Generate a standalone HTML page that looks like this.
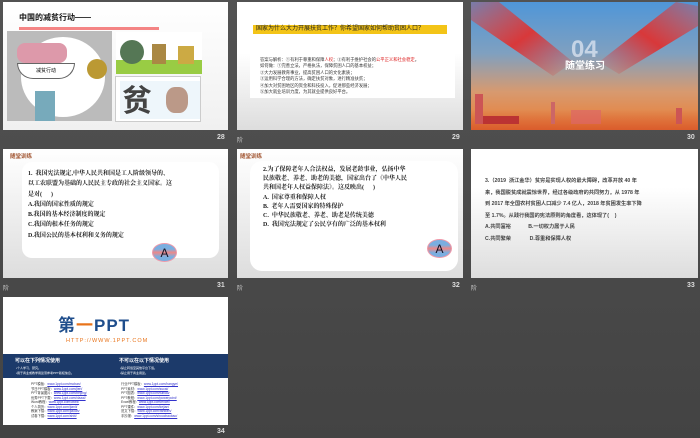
<!DOCTYPE html><html><head><meta charset="utf-8"><style>
*{margin:0;padding:0;box-sizing:border-box}
body{width:700px;height:438px;overflow:hidden;background:linear-gradient(#525252,#434343);font-family:"Liberation Sans","Noto Sans CJK SC",sans-serif;position:relative}
.s{position:absolute;overflow:hidden}
.a{position:absolute}
.n{position:absolute;color:#ddd;font-size:7px;font-weight:bold}
.l{position:absolute;color:#ccc;font-size:6px}
.q{font-family:"Liberation Serif","Noto Serif CJK SC",serif;font-weight:bold;color:#222;font-size:6px;line-height:10.3px;white-space:nowrap}
.ans{position:absolute;width:25px;height:19px;border-radius:50%;background:linear-gradient(#7aaee0 30%,#e88 50%,#7aaee0 75%);border:1px solid #e9a;font-size:12px;text-align:center;line-height:19px;color:#112}
.lk{color:#33c;text-decoration:underline}
</style></head><body>
<!-- slide 28 -->
<div class="s" style="left:3px;top:2px;width:225px;height:128px;background:linear-gradient(#fff,#f0f0f0)">
<div class="a" style="left:16px;top:10px;font-size:8px;font-weight:bold;color:#111">中国的减贫行动——</div>
<div class="a" style="left:16px;top:25px;width:140px;height:3px;background:#e33;opacity:.6"></div>
<div class="a" style="left:4px;top:29px;width:105px;height:90px;background:#bbb">
<div class="a" style="left:14px;top:6px;width:84px;height:80px;border-radius:50%;background:#fff"></div>
<div class="a" style="left:10px;top:12px;width:50px;height:20px;background:#d9a;border-radius:8px"></div>
<div class="a" style="left:10px;top:32px;width:58px;height:16px;background:#fff;border:1px solid #666;border-radius:0 0 30px 30px;font-size:5px;text-align:center;line-height:14px">减贫行动</div>
<div class="a" style="left:28px;top:60px;width:20px;height:30px;background:#7ab"></div>
<div class="a" style="left:80px;top:28px;width:20px;height:20px;background:#b93;border-radius:50%"></div></div>
<div class="a" style="left:113px;top:30px;width:86px;height:42px;background:#fff">
<div class="a" style="left:0;top:28px;width:86px;height:14px;background:#9c4"></div>
<div class="a" style="left:4px;top:8px;width:24px;height:24px;background:#575;border-radius:50%"></div>
<div class="a" style="left:36px;top:12px;width:14px;height:20px;background:#a84"></div>
<div class="a" style="left:62px;top:14px;width:16px;height:18px;background:#ca4"></div></div>
<div class="a" style="left:112px;top:74px;width:86px;height:46px;background:#fff;border:1px solid #ccc">
<div class="a" style="left:4px;top:4px;width:80px;height:38px;background:#eef6fb"></div>
<div class="a" style="left:6px;top:8px;font-size:30px;font-weight:bold;color:#444;line-height:34px">贫</div>
<div class="a" style="left:50px;top:10px;width:22px;height:26px;background:#b98;border-radius:40%"></div></div>
</div>
<div class="n" style="left:217px;top:134px">28</div>
<!-- slide 29 -->
<div class="s" style="left:237px;top:2px;width:226px;height:128px;background:linear-gradient(#fff 40%,#ddd)">
<div class="a" style="left:16px;top:23px;width:194px;height:9px;background:#f3c417;font-size:6px;line-height:9px;color:#222;padding-left:3px;white-space:nowrap">国家为什么大力开展扶贫工作？你希望国家如何帮助贫困人口？</div>
<div class="a" style="left:13px;top:51px;width:205px;height:45px;background:#fff;font-size:4.3px;line-height:6.4px;color:#333;padding:4px 10px;white-space:nowrap">答案与解析：①有利于尊重和保障<span style="color:#d22">人权</span>；②有利于维护社会的<span style="color:#d22">公平正义和社会稳定</span>。<br>如何做：①完善立法，严格执法，保障贫困人口的基本权益；<br>②大力发展教育事业，提高贫困人口的文化素质；<br>③运用科学合理的方法，确定扶贫对象，进行精准扶贫；<br>④加大对贫困地区的资金和科技投入，促进那些经济发展；<br>⑤加大就业培训力度，为其就业提供良好平台。</div>
</div>
<div class="l" style="left:237px;top:135px">阶</div><div class="n" style="left:452px;top:134px">29</div>
<!-- slide 30 -->
<div class="s" style="left:471px;top:2px;width:227px;height:128px;background:linear-gradient(#4f96d8 0%,#7fa0c0 40%,#d79a70 70%,#ec7c30 100%)">
<svg class="a" style="left:0;top:0" width="227" height="128">
<defs><linearGradient id="g1" x1="0" y1="0" x2="1" y2="1"><stop offset="0" stop-color="#d84040" stop-opacity=".3"/><stop offset=".5" stop-color="#d8383a"/><stop offset="1" stop-color="#d8383a" stop-opacity="0"/></linearGradient>
<linearGradient id="g2" x1="1" y1="0" x2="0" y2="1"><stop offset="0" stop-color="#d84040" stop-opacity=".3"/><stop offset=".5" stop-color="#d8383a"/><stop offset="1" stop-color="#d8383a" stop-opacity="0"/></linearGradient></defs>
<polygon points="0,0 28,0 102,60 82,74 0,18" fill="url(#g1)"/>
<polygon points="227,4 227,24 148,72 128,60 205,0" fill="url(#g2)"/>
</svg>
<div class="a" style="left:100px;top:36px;font-size:24px;font-weight:bold;color:rgba(230,235,245,.7);line-height:24px">04</div>
<div class="a" style="left:94px;top:55px;font-size:10px;font-weight:bold;color:#fff">随堂练习</div>
<div class="a" style="left:0;top:108px;width:227px;height:20px;background:linear-gradient(transparent,rgba(200,60,40,.5))"></div>
<div class="a" style="left:4px;top:92px;width:8px;height:30px;background:#c55"></div>
<div class="a" style="left:12px;top:114px;width:36px;height:8px;background:#b33"></div>
<div class="a" style="left:80px;top:100px;width:4px;height:22px;background:#c66"></div>
<div class="a" style="left:100px;top:108px;width:30px;height:14px;background:#d66;opacity:.7"></div>
<div class="a" style="left:205px;top:106px;width:6px;height:16px;background:#c55"></div>
</div>
<div class="n" style="left:687px;top:134px">30</div>
<!-- slide 31 -->
<div class="s" style="left:3px;top:149px;width:225px;height:129px;background:linear-gradient(#fff,#ddd)">
<div class="a" style="left:7px;top:3px;font-size:5.5px;font-weight:bold;color:#a0522d">随堂训练</div>
<div class="a" style="left:19px;top:13px;width:197px;height:96px;background:#fff;border-radius:10px"></div>
<div class="a q" style="left:25px;top:20px">1.&nbsp;&nbsp;我国宪法规定,中华人民共和国是工人阶级领导的、<br>以工农联盟为基础的人民民主专政的社会主义国家。这<br>是对(&nbsp;&nbsp;&nbsp;&nbsp;&nbsp;&nbsp;)<br>A.我国的国家性质的规定<br>B.我国的基本经济制度的规定<br>C.我国的根本任务的规定<br>D.我国公民的基本权利和义务的规定</div>
<div class="ans" style="left:149px;top:94px">A</div>
</div>
<div class="l" style="left:3px;top:283px">阶</div><div class="n" style="left:217px;top:282px">31</div>
<!-- slide 32 -->
<div class="s" style="left:237px;top:149px;width:226px;height:129px;background:linear-gradient(#fff,#ddd)">
<div class="a" style="left:3px;top:3px;font-size:5.5px;font-weight:bold;color:#a0522d">随堂训练</div>
<div class="a" style="left:13px;top:12px;width:208px;height:110px;background:#fff;border-radius:12px"></div>
<div class="a q" style="left:26px;top:17px;line-height:9.2px">2.为了保障老年人合法权益，发展老龄事业，弘扬中华<br>民族敬老、养老、助老的美德，国家出台了《中华人民<br>共和国老年人权益保障法》。这反映出(&nbsp;&nbsp;&nbsp;&nbsp;&nbsp;&nbsp;)<br>A.&nbsp;&nbsp;国家尊重和保障人权<br>B.&nbsp;&nbsp;老年人需要国家的特殊保护<br>C.&nbsp;&nbsp;中华民族敬老、养老、助老是传统美德<br>D.&nbsp;&nbsp;我国宪法规定了公民享有的广泛的基本权利</div>
<div class="ans" style="left:190px;top:90px">A</div>
</div>
<div class="l" style="left:237px;top:283px">阶</div><div class="n" style="left:452px;top:282px">32</div>
<!-- slide 33 -->
<div class="s" style="left:471px;top:149px;width:227px;height:129px;background:linear-gradient(#fff 30%,#ddd)">
<div class="a" style="left:14px;top:27px;font-size:5.2px;line-height:11.5px;color:#444;white-space:nowrap;font-weight:bold">3.（2019&nbsp; 浙江金华）贫穷是实现人权的最大障碍，改革开放 40 年<br>来，我国脱贫成就震惊世界，经过各级政府的共同努力，从 1978 年<br>到 2017 年全国农村贫困人口减少 7.4 亿人，2018 年贫困发生率下降<br>至 1.7%。从践行我国的宪法原则的角度看，这体现了(&nbsp;&nbsp;&nbsp;&nbsp;)<br>A.共同富裕&nbsp;&nbsp;&nbsp;&nbsp;&nbsp;&nbsp;&nbsp;&nbsp;&nbsp;&nbsp;&nbsp;&nbsp;B.一切权力属于人民<br>C.共同繁荣&nbsp;&nbsp;&nbsp;&nbsp;&nbsp;&nbsp;&nbsp;&nbsp;&nbsp;&nbsp;&nbsp;&nbsp;&nbsp;D.尊重和保障人权</div>
</div>
<div class="l" style="left:471px;top:283px">阶</div><div class="n" style="left:687px;top:282px">33</div>
<!-- slide 34 -->
<div class="s" style="left:3px;top:297px;width:225px;height:128px;background:#fff">
<div class="a" style="left:55px;top:19px;font-size:17px;font-weight:bold;color:#1f4e8c;line-height:20px;letter-spacing:1px">第<span style="color:#e8731a">一</span>PPT</div>
<div class="a" style="left:63px;top:41px;font-size:5.5px;color:#e8731a;letter-spacing:1px">HTTP://WWW.1PPT.COM</div>
<div class="a" style="left:0;top:57px;width:225px;height:24px;background:#1c3a6a;color:#fff;font-size:5px;line-height:6px">
<div class="a" style="left:12px;top:4px;font-weight:bold">可以在下列情况使用</div>
<div class="a" style="left:13px;top:11px;font-size:3px">•个人学习、研究。</div>
<div class="a" style="left:13px;top:16px;font-size:3px">•用于商业或教学用途须参考PPT版权信息。</div>
<div class="a" style="left:116px;top:4px;font-weight:bold">不可以在以下情况使用</div>
<div class="a" style="left:117px;top:11px;font-size:3px">•禁止转载至其他平台下载。</div>
<div class="a" style="left:117px;top:16px;font-size:3px">•禁止用于商业用途。</div></div>
<div class="a" style="left:28px;top:85px;font-size:3.3px;line-height:4.5px;color:#333;white-space:nowrap">PPT模板：<span class="lk">www.1ppt.com/moban/</span><br>节日PPT模板：<span class="lk">www.1ppt.com/jieri/</span><br>PPT背景图片：<span class="lk">www.1ppt.com/beijing/</span><br>优秀PPT下载：<span class="lk">www.1ppt.com/xiazai/</span><br>Word教程：<span class="lk">www.1ppt.com/word/</span><br>个人简历：<span class="lk">www.1ppt.com/jianli/</span><br>教案下载：<span class="lk">www.1ppt.com/jiaoan/</span><br>试卷下载：<span class="lk">www.1ppt.com/shiti/</span></div>
<div class="a" style="left:118px;top:85px;font-size:3.3px;line-height:4.5px;color:#333;white-space:nowrap">行业PPT模板：<span class="lk">www.1ppt.com/hangye/</span><br>PPT素材：<span class="lk">www.1ppt.com/sucai/</span><br>PPT图表：<span class="lk">www.1ppt.com/tubiao/</span><br>PPT教程：<span class="lk">www.1ppt.com/powerpoint/</span><br>Excel教程：<span class="lk">www.1ppt.com/excel/</span><br>PPT课件：<span class="lk">www.1ppt.com/kejian/</span><br>范文下载：<span class="lk">www.1ppt.com/fanwen/</span><br>手抄报：<span class="lk">www.1ppt.com/shouchaobao/</span></div>
</div>
<div class="n" style="left:217px;top:428px">34</div>
</body></html>
